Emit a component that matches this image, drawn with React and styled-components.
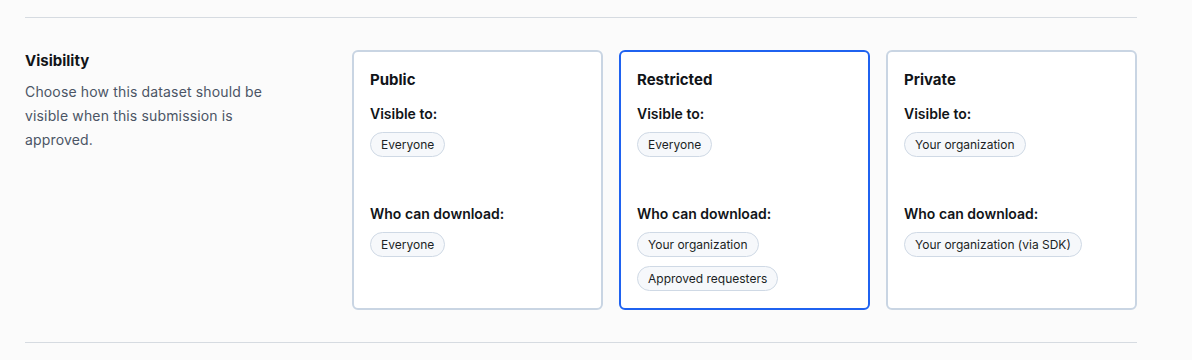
import styled, { createGlobalStyle } from "styled-components";

const options = [
  {
    title: "Public",
    visible: ["Everyone"],
    download: ["Everyone"],
  },
  {
    title: "Restricted",
    visible: ["Everyone"],
    download: ["Your organization", "Approved requesters"],
  },
  {
    title: "Private",
    visible: ["Your organization"],
    download: ["Your organization (via SDK)"],
  },
];

const App = () => {
  const selected = "Restricted";
  return (
    <>
      <GlobalStyle />
      <Page>
        <Section>
          <Intro>
            <Heading>Visibility</Heading>
            <Description>
              Choose how this dataset should be visible when this submission is
              approved.
            </Description>
          </Intro>
          {options.map((option) => (
            <Card key={option.title} $active={option.title === selected}>
              <CardTitle>{option.title}</CardTitle>
              <Group>
                <Label>Visible to:</Label>
                <Pills>
                  {option.visible.map((item) => (
                    <Pill key={item}>{item}</Pill>
                  ))}
                </Pills>
              </Group>
              <Group $last>
                <Label>Who can download:</Label>
                <Pills>
                  {option.download.map((item) => (
                    <Pill key={item}>{item}</Pill>
                  ))}
                </Pills>
              </Group>
            </Card>
          ))}
        </Section>
      </Page>
    </>
  );
};

export default App;

const GlobalStyle = createGlobalStyle`
  body {
    margin: 0;
    background: #fbfbfb;
    font-family: Inter, "Noto Sans", sans-serif;
  }
`;

const Page = styled.div`
  width: 1112px;
  padding: 17px 0 0 25px;
`;

const Section = styled.div`
  display: grid;
  grid-template-columns: 311px repeat(3, 251px);
  column-gap: 16px;
  padding: 32px 0;
  border-top: 1px solid #d6dbe1;
  border-bottom: 1px solid #d6dbe1;
`;

const Intro = styled.div`
  display: flex;
  flex-direction: column;
  gap: 8px;
`;

const Heading = styled.h2`
  margin: 0;
  font-size: 15px;
  line-height: 22px;
  font-weight: 700;
  color: #111418;
`;

const Description = styled.p`
  margin: 0;
  max-width: 250px;
  font-size: 14px;
  line-height: 24px;
  letter-spacing: 0.15px;
  color: #4b5565;
`;

const Card = styled.div`
  display: flex;
  flex-direction: column;
  padding: 18px 16px 17px;
  background: #ffffff;
  border: 2px solid ${({ $active }) => ($active ? "#1f62f0" : "#c9d5e3")};
  border-radius: 6px;
`;

const CardTitle = styled.h3`
  margin: 0 0 14px;
  font-size: 15px;
  line-height: 20px;
  font-weight: 700;
  color: #111418;
`;

const Group = styled.div`
  display: flex;
  flex-direction: column;
  gap: 8px;
  min-height: ${({ $last }) => ($last ? "0" : "85px")};
  margin-bottom: ${({ $last }) => ($last ? "0" : "15px")};
`;

const Label = styled.div`
  font-size: 14px;
  line-height: 20px;
  font-weight: 600;
  color: #111418;
`;

const Pills = styled.div`
  display: flex;
  flex-direction: column;
  align-items: flex-start;
  gap: 9px;
`;

const Pill = styled.span`
  display: inline-block;
  padding: 3px 10px;
  font-size: 12px;
  line-height: 17px;
  color: #1b1f24;
  background: #f6f8fb;
  border: 1px solid #cfd9e5;
  border-radius: 999px;
  white-space: nowrap;
`;
